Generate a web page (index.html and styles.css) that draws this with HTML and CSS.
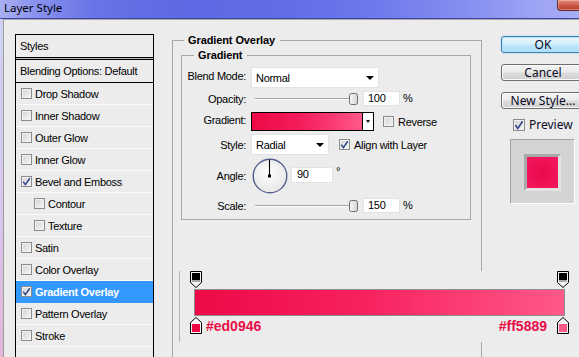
FILE: index.html
```html
<!DOCTYPE html>
<html>
<head>
<meta charset="utf-8">
<title>Layer Style</title>
<link rel="stylesheet" href="styles.css">
</head>
<body>
<div class="window">
  <div class="titlebar">
    <span class="title">Layer Style</span>
    <div class="close-btn"></div>
  </div>
  <div class="frame">
    <div class="body">
      <div class="styles-list">
        <div class="list-header">Styles</div>
        <div class="list-sep"></div>
        <div class="list-blending">Blending Options: Default</div>
        <div class="list-row"><span class="cb"></span>Drop Shadow</div>
        <div class="list-row"><span class="cb"></span>Inner Shadow</div>
        <div class="list-row"><span class="cb"></span>Outer Glow</div>
        <div class="list-row"><span class="cb"></span>Inner Glow</div>
        <div class="list-row"><span class="cb checked"><svg viewBox="0 0 9 9" width="9" height="9"><path d="M1.2 4.6 L3.4 7.6 L7.8 1.2" fill="none" stroke="#3a4c8e" stroke-width="1.6"/></svg></span>Bevel and Emboss</div>
        <div class="list-row sub"><span class="cb"></span>Contour</div>
        <div class="list-row sub"><span class="cb"></span>Texture</div>
        <div class="list-row"><span class="cb"></span>Satin</div>
        <div class="list-row"><span class="cb"></span>Color Overlay</div>
        <div class="list-row active"><span class="cb checked"><svg viewBox="0 0 9 9" width="9" height="9"><path d="M1.2 4.6 L3.4 7.6 L7.8 1.2" fill="none" stroke="#3a4c8e" stroke-width="1.6"/></svg></span>Gradient Overlay</div>
        <div class="list-row"><span class="cb"></span>Pattern Overlay</div>
        <div class="list-row"><span class="cb"></span>Stroke</div>
      </div>

      <div class="main">
        <div class="group outer">
          <div class="group-title outer-title">Gradient Overlay</div>
          <div class="group inner">
            <div class="group-title inner-title">Gradient</div>

            <div class="form-row r-blend">
              <span class="lbl">Blend Mode:</span>
              <div class="select sel-blend"><span class="sel-text">Normal</span><span class="arrow"></span></div>
            </div>

            <div class="form-row r-opacity">
              <span class="lbl">Opacity:</span>
              <div class="slider">
                <div class="track track-full"></div>
                <svg class="thumb" width="9" height="12" viewBox="0 0 9 12"><defs><linearGradient id="tg1" x1="0" y1="0" x2="1" y2="0"><stop offset="0" stop-color="#fafafa"/><stop offset="1" stop-color="#d2d2d2"/></linearGradient></defs><rect x="0.5" y="0.5" width="8" height="11" rx="2" fill="url(#tg1)" stroke="#6c6c6c"/></svg>
              </div>
              <div class="num">100</div>
              <span class="unit">%</span>
            </div>

            <div class="form-row r-gradient">
              <span class="lbl">Gradient:</span>
              <div class="grad-swatch"><div class="grad-fill"></div><div class="grad-arrow"><span class="arrow small"></span></div></div>
              <span class="cb reverse-cb"></span><span class="cb-label">Reverse</span>
            </div>

            <div class="form-row r-style">
              <span class="lbl">Style:</span>
              <div class="select sel-style"><span class="sel-text">Radial</span><span class="arrow"></span></div>
              <span class="cb checked align-cb"><svg viewBox="0 0 9 9" width="9" height="9"><path d="M1.2 4.6 L3.4 7.6 L7.8 1.2" fill="none" stroke="#3a4c8e" stroke-width="1.6"/></svg></span><span class="cb-label">Align with Layer</span>
            </div>

            <div class="form-row r-angle">
              <span class="lbl">Angle:</span>
              <svg class="dial" width="36" height="36" viewBox="0 0 36 36"><defs><radialGradient id="dg" cx="0.45" cy="0.4" r="0.6"><stop offset="0" stop-color="#ffffff"/><stop offset="1" stop-color="#e6e6e6"/></radialGradient></defs><circle cx="18" cy="18" r="16.8" fill="url(#dg)" stroke="#56618f" stroke-width="1.4"/><line x1="17.5" y1="18" x2="17.5" y2="1.5" stroke="#000" stroke-width="1.1"/><rect x="16" y="16.5" width="3" height="3" fill="#000"/></svg>
              <div class="num num-angle">90</div>
              <span class="deg">°</span>
            </div>

            <div class="form-row r-scale">
              <span class="lbl">Scale:</span>
              <div class="slider">
                <div class="track track-full"></div>
                <svg class="thumb" width="9" height="12" viewBox="0 0 9 12"><defs><linearGradient id="tg2" x1="0" y1="0" x2="1" y2="0"><stop offset="0" stop-color="#fafafa"/><stop offset="1" stop-color="#d2d2d2"/></linearGradient></defs><rect x="0.5" y="0.5" width="8" height="11" rx="2" fill="url(#tg2)" stroke="#6c6c6c"/></svg>
              </div>
              <div class="num">150</div>
              <span class="unit">%</span>
            </div>
          </div>
        </div>
      </div>

      <div class="side">
        <button class="btn btn-ok">OK</button>
        <button class="btn">Cancel</button>
        <button class="btn">New Style...</button>
        <div class="preview-row"><span class="cb cb-preview checked"><svg viewBox="0 0 10 10" width="10" height="10"><path d="M1.4 5 L3.8 8.4 L8.6 1.3" fill="none" stroke="#3a4c8e" stroke-width="1.7"/></svg></span><span class="preview-label">Preview</span></div>
        <div class="preview-box"><div class="preview-swatch"></div></div>
      </div>
    </div>

    <div class="grad-editor">
      <div class="ge-inner">
        <div class="ge-stops">
          <svg width="12" height="17" viewBox="0 0 12 17"><path d="M0.5 0.5 H11.5 V11.5 L6 16.5 L0.5 11.5 Z" fill="#f4f4f4" stroke="#000"/><rect x="2" y="2" width="8" height="7" fill="#000"/><rect x="2" y="9" width="8" height="2" fill="#a8a8a8"/></svg>
          <svg width="12" height="17" viewBox="0 0 12 17"><path d="M0.5 0.5 H11.5 V11.5 L6 16.5 L0.5 11.5 Z" fill="#f4f4f4" stroke="#000"/><rect x="2" y="2" width="8" height="7" fill="#000"/><rect x="2" y="9" width="8" height="2" fill="#a8a8a8"/></svg>
        </div>
        <div class="ge-bar"></div>
        <div class="ge-bottom">
          <svg width="12" height="17" viewBox="0 0 12 17"><path d="M6 0.5 L11.5 5.5 V16.5 H0.5 V5.5 Z" fill="#f4f4f4" stroke="#000"/><rect x="2" y="7" width="8" height="8" fill="#ed0946"/></svg>
          <span class="hex hex-left">#ed0946</span>
          <span class="ge-spacer"></span>
          <span class="hex hex-right">#ff5889</span>
          <svg width="12" height="17" viewBox="0 0 12 17"><path d="M6 0.5 L11.5 5.5 V16.5 H0.5 V5.5 Z" fill="#f4f4f4" stroke="#000"/><rect x="2" y="7" width="8" height="8" fill="#ff5889"/></svg>
        </div>
      </div>
    </div>
  </div>
</div>
</body>
</html>
```

FILE: styles.css
```css
* { box-sizing: border-box; }

html, body {
  margin: 0;
  padding: 0;
  background: #ececec;
}

.window {
  position: relative;
  width: 579px;
  height: 357px;
  overflow: hidden;
  font-family: "Liberation Sans", Arial, sans-serif;
  font-size: 11px;
  letter-spacing: -0.3px;
  color: #000;
}

/* ---------- title bar ---------- */
.titlebar {
  height: 19px;
  border-bottom: 1px solid #3a46a6;
  background: linear-gradient(90deg, #aab0f3 0%, #8a92ee 6%, #6a74e6 16%, #5e68e2 32%, #636de6 50%, #6f79ec 65%, #858ef0 80%, #9ca2f4 92%, #a8adf6 100%);
  display: flex;
  align-items: flex-start;
  justify-content: space-between;
}

.title {
  font-family: "Noto Sans", "Open Sans", sans-serif;
  font-size: 11.5px;
  letter-spacing: 0;
  line-height: normal;
  margin: 0 0 0 4px;
  color: #000;
}

.close-btn {
  width: 44px;
  height: 11px;
  margin-right: -22px;
  border: 1px solid #5e2a24;
  border-top: none;
  border-radius: 0 0 4px 4px;
  background: linear-gradient(#e2907f, #c9533f 60%, #b53a29);
  box-shadow: inset 0 0 0 1px rgba(255, 200, 190, 0.5);
}

/* ---------- frame / body ---------- */
.frame {
  position: relative;
  height: 338px;
  padding-left: 3px;
  background: linear-gradient(#cfd1f6, #d6c8ef 50%, #e4b6da);
}

.body {
  height: 100%;
  background: #ececec;
  border-left: 1px solid #9c9c9c;
  border-top: 1px solid #a8a8a8;
  display: flex;
  align-items: flex-start;
}

/* ---------- styles list ---------- */
.styles-list {
  margin: 14px 0 0 11px;
  width: 139px;
  height: 340px;
  border: 1px solid #000;
  border-bottom: none;
  background: #ececec;
  flex: none;
}

.list-header,
.list-blending {
  height: 22px;
  line-height: 22px;
  padding-left: 4px;
}

.list-sep {
  height: 3px;
  border-top: 1px solid #000;
  border-bottom: 1px solid #000;
  background: #bdbdbd;
}

.list-blending {
  height: 23px;
  border-bottom: 1px solid #000;
}

.list-row {
  height: 22px;
  border-bottom: 1px solid #fbfbfb;
  display: flex;
  align-items: center;
  padding-left: 5px;
}

.list-row.sub { padding-left: 18px; }

.list-row .cb { margin-right: 3px; }

.list-row.active {
  background: #3399ff;
  color: #fff;
  font-weight: bold;
  border-bottom-color: #3399ff;
}

/* ---------- checkbox ---------- */
.cb {
  width: 11px;
  height: 11px;
  flex: none;
  border: 1px solid #8c8c8c;
  background: linear-gradient(135deg, #d4d4d4, #f6f6f6);
  box-shadow: inset 0 0 0 1px #f2f2f2;
  display: inline-flex;
  align-items: center;
  justify-content: center;
}

.cb svg { display: block; }

/* ---------- main area ---------- */
.main {
  margin: 20px 0 0 18px;
  width: 310px;
  flex: none;
}

.group {
  border: 1px solid #a7a7a7;
}

.group.outer {
  height: 340px;
}

.group-title {
  font-weight: bold;
  height: 13px;
  line-height: 13px;
  margin-top: -7px;
  padding: 0 5px 0 4px;
  background: #ececec;
  width: max-content;
  letter-spacing: -0.1px;
}

.outer-title { margin-left: 11px; }
.inner-title { margin-left: 12px; }

.group.inner {
  margin: 8px 10px 0 8px;
  padding-bottom: 6px;
}

.form-row {
  display: flex;
  align-items: center;
}

.lbl {
  width: 64px;
  flex: none;
  text-align: right;
  margin-right: 5px;
}

.r-blend   { margin-top: 5px; height: 21px; }
.r-opacity { margin-top: 3px; height: 15px; }
.r-gradient{ margin-top: 6px; height: 19px; }
.r-style   { margin-top: 3px; height: 21px; }
.r-angle   { margin-top: 3px; height: 36px; }
.r-scale   { margin-top: 4px; height: 15px; }

.r-blend .lbl, .r-gradient .lbl { margin-top: -3px; }

.select {
  height: 21px;
  background: #fff;
  border: 1px solid #e3e3e3;
  display: flex;
  align-items: center;
  justify-content: space-between;
  padding: 0 4px 0 4px;
}

.sel-blend { width: 128px; }
.sel-style { width: 78px; }

.sel-text { line-height: 13px; margin-top: 1px; }

.arrow {
  width: 0;
  height: 0;
  border-left: 4px solid transparent;
  border-right: 4px solid transparent;
  border-top: 4px solid #000;
}

.arrow.small {
  border-left-width: 2.5px;
  border-right-width: 2.5px;
  border-top-width: 3px;
}

/* slider */
.slider {
  width: 107px;
  height: 15px;
  padding-left: 4px;
  display: flex;
  align-items: center;
  flex: none;
}

.track {
  width: 98px;
  height: 2px;
  border-top: 1px solid #a4a4a4;
  border-bottom: 1px solid #ffffff;
}

.thumb {
  display: block;
  margin-left: -4px;
}

.num {
  width: 37px;
  height: 15px;
  background: #fff;
  border: 1px solid #e3e3e3;
  padding-left: 4px;
  line-height: 13px;
  margin-left: 5px;
  flex: none;
}

.unit { margin-left: 3px; margin-top: -2px; }

/* gradient swatch */
.grad-swatch {
  width: 123px;
  height: 19px;
  border: 1px solid #000;
  display: flex;
  flex: none;
}

.grad-fill {
  flex: 1;
  background: linear-gradient(90deg, #ed0946, #f51d5b 45%, #ff5889);
}

.grad-arrow {
  width: 11px;
  border-left: 1px solid #000;
  background: #fff;
  display: flex;
  align-items: center;
  justify-content: center;
}

.reverse-cb { margin-left: 9px; }
.align-cb { margin-left: 10px; }

.cb-label { margin-left: 4px; }

/* angle */
.dial {
  display: block;
  margin-left: 1px;
  flex: none;
}

.num-angle {
  width: 42px;
  height: 16px;
  margin-left: 3px;
  padding-left: 5px;
  margin-top: -3px;
}

.deg {
  margin-left: 3px;
  margin-top: -10px;
}

/* ---------- side buttons ---------- */
.side {
  margin: 16px 0 0 19px;
  width: 84px;
  flex: none;
}

.btn {
  display: block;
  width: 84px;
  height: 17px;
  padding: 0;
  margin: 0 0 11px 0;
  border: 1px solid #707070;
  border-radius: 3px;
  background: linear-gradient(#f3f3f3 0%, #ebebeb 45%, #dcdcdc 55%, #cfcfcf 100%);
  box-shadow: inset 0 0 0 1px #fafafa;
  font-family: "Noto Sans", "Open Sans", sans-serif;
  font-size: 12px;
  line-height: 14px;
  letter-spacing: 0;
  color: #0a0a1e;
  text-align: center;
}

.btn-ok {
  border-color: #3c7fb1;
  background: linear-gradient(#e8f6fd 0%, #d8effc 45%, #bee6fd 55%, #a9dbf6 100%);
  box-shadow: inset 0 0 0 1px #b6e4fb, 0 0 2px #8fd2f6;
}

.preview-row {
  display: flex;
  align-items: center;
  margin: -2px 0 0 12px;
  height: 13px;
}

.cb-preview {
  width: 12px;
  height: 12px;
}

.preview-label {
  font-family: "Noto Sans", "Open Sans", sans-serif;
  font-size: 12px;
  letter-spacing: 0;
  margin-left: 4px;
  color: #0a0a1e;
}

.preview-box {
  margin: 8px 0 0 9px;
  width: 65px;
  height: 65px;
  background: #d4d4d4;
  border-top: 1px solid #a3a3a3;
  border-left: 1px solid #a3a3a3;
  border-right: 1px solid #ffffff;
  border-bottom: 1px solid #ffffff;
  padding: 14px 0 0 13px;
}

.preview-swatch {
  width: 37px;
  height: 37px;
  border-style: solid;
  border-width: 3px;
  border-color: #a9a9a9 #e2e2e2 #e2e2e2 #a9a9a9;
  background: radial-gradient(circle at 50% 50%, #e8094a, #f2145a 70%, #f51a5c);
}

/* ---------- gradient editor (pasted over) ---------- */
.grad-editor {
  position: absolute;
  left: 179px;
  top: 252px;
  width: 420px;
  height: 71px;
  background: #ececec;
  border-left: 1px solid #b4b4b4;
}

.ge-inner {
  margin-left: 10px;
  width: 379px;
}

.ge-stops {
  display: flex;
  justify-content: space-between;
  height: 17px;
}

.ge-stops svg, .ge-bottom svg { display: block; flex: none; }

.ge-bar {
  margin: 1px 0 0 4px;
  width: 371px;
  height: 27px;
  border: 1px solid #8e8e8e;
  background: linear-gradient(90deg, #ed0946, #f7215e 45%, #ff5889);
}

.ge-bottom {
  margin-top: 1px;
  display: flex;
  align-items: center;
  height: 17px;
}

.hex {
  font-family: "Liberation Sans", Arial, sans-serif;
  font-weight: bold;
  font-size: 14px;
  letter-spacing: 0;
  color: #ea0c48;
  line-height: 16px;
}

.hex-left { margin-left: 4px; }
.hex-right { margin-right: 10px; }

.ge-spacer { flex: 1; }
```
